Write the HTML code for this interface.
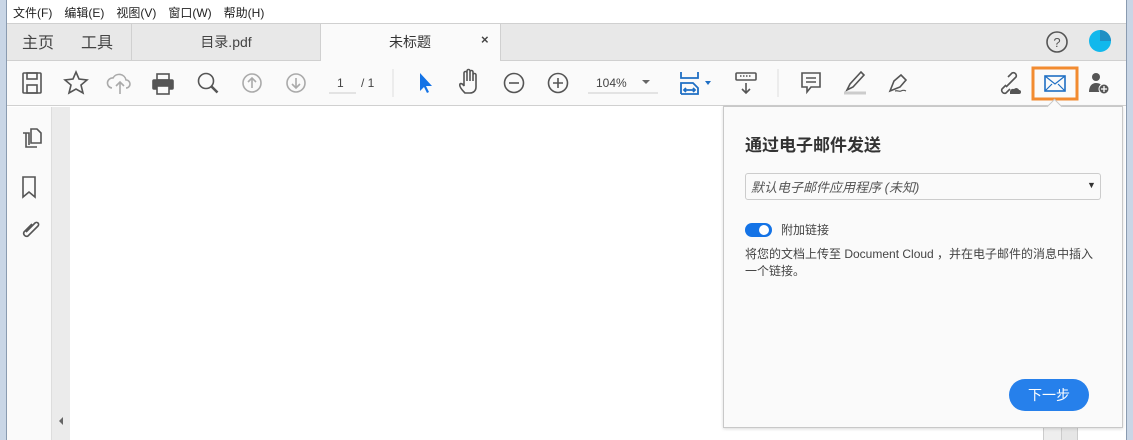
<!DOCTYPE html>
<html><head><meta charset="utf-8"><style>
*{margin:0;padding:0;box-sizing:border-box}
body{width:1133px;height:440px;overflow:hidden;background:#fff;font-family:"Liberation Sans","Noto Sans CJK SC",sans-serif;position:relative}
.a{position:absolute}
.ic{position:absolute}
</style></head><body>
<div class="a" style="left:0;top:0;width:6px;height:440px;background:#c9d6e6"></div>
<div class="a" style="right:0;top:0;width:6px;height:440px;background:#c9d6e6"></div>
<div class="a" style="left:6px;top:0;width:1121px;height:440px;background:#fff;border-left:1px solid #8a9bb0;border-right:1px solid #8a9bb0"></div>
<!-- menu -->
<div class="a" style="left:13px;top:4px;font-size:12px;color:#222;word-spacing:0">
<span style="margin-right:12px">文件(F)</span><span style="margin-right:12px">编辑(E)</span><span style="margin-right:12px">视图(V)</span><span style="margin-right:12px">窗口(W)</span><span>帮助(H)</span></div>
<!-- tab bar -->
<div class="a" style="left:7px;top:23px;width:1119px;height:38px;background:#e8e8e8;border-top:1px solid #d0d0d0;border-bottom:1px solid #d0d0d0"></div>
<div class="a" style="left:22px;top:29px;font-size:16px;color:#444">主页</div>
<div class="a" style="left:81px;top:29px;font-size:16px;color:#444">工具</div>
<div class="a" style="left:131px;top:24px;width:1px;height:36px;background:#d0d0d0"></div>
<div class="a" style="left:132px;top:32px;width:188px;text-align:center;font-size:14px;color:#444">目录.pdf</div>
<div class="a" style="left:320px;top:24px;width:181px;height:37px;background:#fafafa;border-left:1px solid #d0d0d0;border-right:1px solid #d0d0d0"></div>
<div class="a" style="left:360px;top:32px;width:100px;text-align:center;font-size:14px;color:#333">未标题</div>
<div class="a" style="left:481px;top:32px;font-size:13px;color:#444;font-weight:bold">×</div>
<svg class="ic" style="left:1045px;top:30px" width="24" height="24"><circle cx="12" cy="12" r="10" fill="none" stroke="#555" stroke-width="1.6"/><text x="12" y="17" font-size="13" text-anchor="middle" fill="#555" font-family="Liberation Sans">?</text></svg>
<svg class="ic" style="left:1087px;top:28px" width="26" height="26"><circle cx="13" cy="13" r="11" fill="#11b8ec"/><path d="M13 2A11 11 0 0 1 24 13H13Z" fill="#1f8fc4"/></svg>
<!-- toolbar -->
<div class="a" style="left:7px;top:61px;width:1119px;height:45px;background:#fafafa;border-bottom:1px solid #d0d0d0"></div>
<svg class="a" style="left:0;top:61px" width="1133" height="45" fill="none" stroke="#555" stroke-width="1.6">
<rect x="23" y="12" width="18" height="20" rx="1"/><rect x="27" y="12" width="10" height="6"/><rect x="27" y="24" width="10" height="8"/>
<path d="M76 11l3 7 8 1-6 5 2 8-7-4-7 4 2-8-6-5 8-1z"/>
<path d="M112 27a5 5 0 0 1 1-10 7 7 0 0 1 13 2 4 4 0 0 1 0 8M120 33V21m-4 4l4-4 4 4" stroke="#aaa"/>
<rect x="153" y="19" width="20" height="9" rx="1" fill="#555"/><rect x="157" y="13" width="12" height="6"/><rect x="157" y="25" width="12" height="8" fill="#fafafa"/>
<circle cx="206" cy="20" r="7.5"/><path d="M211.5 25.5l6 6" stroke-width="2.6"/>
<circle cx="252" cy="22" r="9" stroke="#aaa"/><path d="M252 27v-10m-4 4l4-4 4 4" stroke="#aaa"/>
<circle cx="296" cy="22" r="9" stroke="#aaa"/><path d="M296 17v10m-4-4l4 4 4-4" stroke="#aaa"/>
<path d="M329 32h27" stroke="#ccc" stroke-width="1"/>
<path d="M393 8v28" stroke="#ddd" stroke-width="1"/>
<path d="M420 12v18l4-4 3 6 2-1-3-6h6z" fill="#1473e6" stroke="none"/>
<path d="M465 32c-3-3-6-7-5-9 1-1 3 0 4 2V12a1.5 1.5 0 0 1 3 0v8V10a1.5 1.5 0 0 1 3 0v10V11a1.5 1.5 0 0 1 3 0v9V14a1.5 1.5 0 0 1 3 0v12c0 4-3 6-6 6z"/>
<circle cx="514" cy="22" r="9.5"/><path d="M509 22h10"/>
<circle cx="558" cy="22" r="9.5"/><path d="M553 22h10M558 17v10"/>
<path d="M588 32h70" stroke="#ccc" stroke-width="1"/>
<path d="M642 19l4 4 4-4z" fill="#666" stroke="none"/>
<path d="M681 11v6h17v-6M681 33V22h12l5 5v6H681M684 29h11m-9-2l-2 2 2 2m7-4l2 2-2 2" stroke="#1f6fc4" stroke-width="1.8"/>
<path d="M705 20l3 4 3-4z" fill="#1f6fc4" stroke="none"/>
<rect x="736" y="12" width="20" height="7" rx="1"/><path d="M740 15h12" stroke-dasharray="1.5 1.5"/><path d="M746 22v10m-4-4l4 4 4-4"/>
<path d="M778 8v28" stroke="#ddd" stroke-width="1"/>
<path d="M802 12h18v14h-9l-4 5v-5h-5z"/><path d="M806 17h10M806 21h10"/>
<path d="M847 29l3-6 11-12 3 3-11 12z"/><path d="M844 32h22" stroke="#ccc" stroke-width="3"/>
<path d="M890 30l4-10 7-6 5 5-6 7z"/><path d="M895 30c3-1 4 1 6 0s3-1 5 0" stroke-width="1.2"/>
<path d="M1006 24l-4 4a3 3 0 0 0 4 4l4-4M1012 20l4-4a3 3 0 0 0-4-4l-4 4M1006 26l6-6"/><path d="M1010 31a3 3 0 0 1 4-3 3 3 0 0 1 5 1 2 2 0 0 1 0 4h-9z" fill="#555" stroke="none"/>
<rect x="1033" y="7" width="44" height="31" fill="none" stroke="#f28b30" stroke-width="3"/>
<rect x="1045" y="15" width="20" height="15" stroke="#1f6fc4"/><path d="M1045 15l10 8 10-8M1045 30l7-7M1065 30l-7-7" stroke="#1f6fc4" stroke-width="1.2"/>
<circle cx="1096" cy="16" r="4" fill="#555" stroke="none"/><path d="M1089 31c0-6 3-9 7-9s6 2 6 5v4z" fill="#555" stroke="none"/><circle cx="1104" cy="28" r="5" fill="#555" stroke="#fafafa" stroke-width="1"/><path d="M1101 28h6M1104 25v6" stroke="#fff" stroke-width="1.3"/>
</svg>
<div class="a" style="left:337px;top:76px;font-size:12px;color:#444">1</div>
<div class="a" style="left:361px;top:76px;font-size:12px;color:#444">/ 1</div>
<div class="a" style="left:596px;top:76px;font-size:12px;color:#444">104%</div>
<!-- left pane -->
<div class="a" style="left:7px;top:107px;width:45px;height:333px;background:#fafafa;border-right:1px solid #ddd"></div>
<div class="a" style="left:52px;top:107px;width:18px;height:333px;background:#ebebeb"></div>
<svg class="a" style="left:7px;top:107px" width="63" height="333" fill="none" stroke="#555" stroke-width="1.6">
<path d="M19 26v14h11M24 22h6l4 4v10h-10z"/><path d="M16 26h6v12"/>
<path d="M16 70v20l6-5 6 5V70z"/>
<path d="M25 117l-8 8a3 3 0 0 0 4 4l10-10a2 2 0 0 0-3-3l-9 9"/>
<path d="M56 310v8l-4-4z" fill="#666" stroke="none"/>
</svg>
<div class="a" style="left:1043px;top:420px;width:18px;height:20px;background:#eee;border-left:1px solid #ccc"></div>
<div class="a" style="left:1061px;top:420px;width:17px;height:20px;background:#e6e6e6;border-left:1px solid #ccc;border-right:1px solid #ccc"></div>
<!-- panel -->
<div class="a" style="left:723px;top:106px;width:400px;height:322px;background:#fafafa;border:1px solid #c8c8c8;box-shadow:0 1px 3px rgba(0,0,0,.15)"></div>
<div class="a" style="left:1049px;top:101px;width:11px;height:11px;background:#fafafa;border-left:1px solid #c8c8c8;border-top:1px solid #c8c8c8;transform:rotate(45deg)"></div>
<div class="a" style="left:745px;top:131px;font-size:17px;font-weight:bold;color:#333">通过电子邮件发送</div>
<div class="a" style="left:745px;top:173px;width:356px;height:27px;border:1px solid #ccc;border-radius:3px;background:#fafafa"></div>
<div class="a" style="left:751px;top:177px;font-size:13px;font-style:italic;color:#555">默认电子邮件应用程序 (未知)</div>
<div class="a" style="left:1087px;top:180px;font-size:9px;color:#333">▼</div>
<div class="a" style="left:745px;top:223px;width:27px;height:14px;border-radius:7px;background:#1473e6"></div>
<div class="a" style="left:759px;top:225px;width:10px;height:10px;border-radius:5px;background:#fff"></div>
<div class="a" style="left:781px;top:221px;font-size:12px;color:#444">附加链接</div>
<div class="a" style="left:745px;top:246px;width:352px;font-size:12px;line-height:17px;color:#444">将您的文档上传至 Document Cloud ，并在电子邮件的消息中插入一个链接。</div>
<div class="a" style="left:1009px;top:379px;width:80px;height:32px;border-radius:16px;background:#2680eb;color:#fff;font-size:14px;text-align:center;line-height:32px">下一步</div>
</body></html>
